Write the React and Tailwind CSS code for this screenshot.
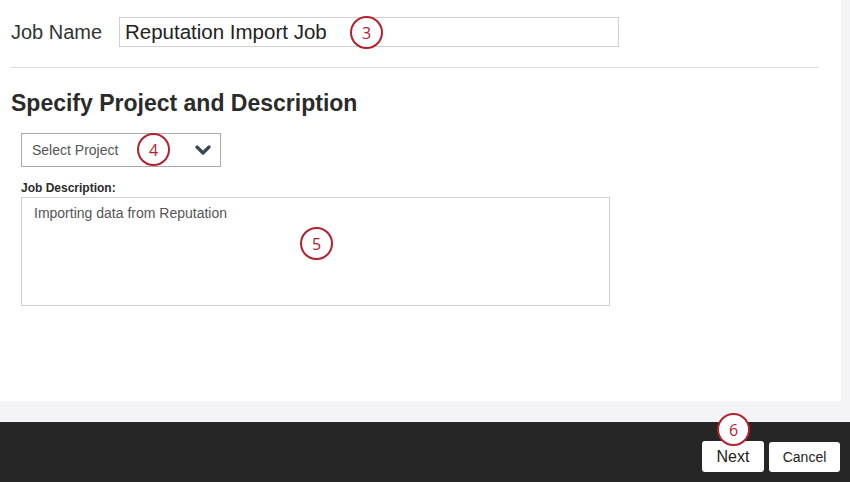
import React from "react";

function Marker({ n, className }) {
  return (
    <div
      className={`absolute flex h-[33px] w-[33px] items-center justify-center rounded-full border-[2.5px] border-[#b3202e] bg-white text-[16px] leading-none text-[#b3202e] ${className}`}
      style={{ fontFamily: '"Open Sans", "Noto Sans", sans-serif' }}
    >
      {n}
    </div>
  );
}

export default function App() {
  return (
    <div
      className="flex h-[482px] w-[850px] flex-col overflow-hidden bg-[#f4f4f6] text-[#333]"
      style={{ fontFamily: '"Liberation Sans", Arial, sans-serif' }}
    >
      <div className="relative mr-[9px] h-[401px] bg-white pl-[11px]">
        {/* Job name row */}
        <div className="flex items-center pt-[17px]">
          <div className="w-[108px] text-[20px] text-[#333]">Job Name</div>
          <div className="relative flex h-[30px] w-[500px] items-center border border-[#cfcfcf] pl-[5px] text-[20.5px] text-[#222]">
            Reputation Import Job
            <Marker n="3" className="left-[230px] top-[-2px]" />
          </div>
        </div>
        <div className="mt-[20px] mr-[22px] h-px bg-[#dcdcdc]" />

        <h2 className="mt-[24px] text-[23px] font-bold leading-none text-[#2b2b2b]">
          Specify Project and Description
        </h2>

        <div className="ml-[10px] mt-[18px]">
          <div className="relative flex h-[34px] w-[200px] items-center justify-between border border-[#a9a9a9] pl-[10px] pr-[8px] text-[14px] text-[#555]">
            <span>Select Project</span>
            <svg width="16" height="12" viewBox="0 0 16 12" className="mr-[1px]">
              <path d="M2 3 L8 9 L14 3" fill="none" stroke="#3a4753" strokeWidth="3.2" strokeLinecap="round" strokeLinejoin="round" />
            </svg>
            <Marker n="4" className="left-[115px] top-[-1px]" />
          </div>

          <div className="mt-[12px] text-[12px] font-bold text-[#2b2b2b]">Job Description:</div>
          <div className="relative mt-0 h-[109px] w-[589px] border border-[#cfcfcf] px-[12px] pt-[5px] text-[14px] text-[#555]">
            Importing data from Reputation
            <Marker n="5" className="left-[278px] top-[29px]" />
          </div>
        </div>
      </div>
      <div className="h-[21px]" />

      <div className="relative flex flex-1 items-end justify-end gap-[5px] bg-[#262626] pb-[10px] pr-[10px]">
        <div className="relative flex h-[31px] w-[62px] items-center justify-center rounded-[3px] bg-white text-[16px] text-[#222]">
          Next
          <Marker n="6" className="left-[15px] top-[-28px]" />
        </div>
        <div className="flex h-[30px] w-[71px] items-center justify-center rounded-[3px] bg-white text-[14px] text-[#222]">
          Cancel
        </div>
      </div>
    </div>
  );
}
